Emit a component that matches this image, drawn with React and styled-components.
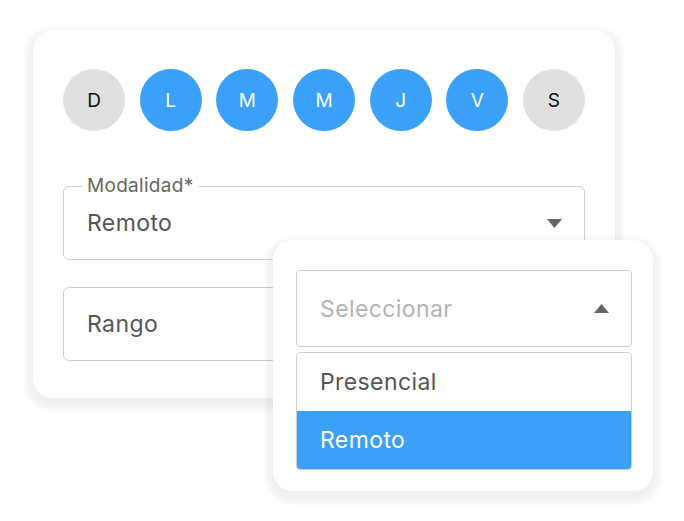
import styled, { createGlobalStyle } from "styled-components";

const GlobalStyle = createGlobalStyle`
  html, body {
    margin: 0;
    padding: 0;
    background: #ffffff;
    font-family: Inter, "Noto Sans", Arial, sans-serif;
  }
`;

const Page = styled.div`
  position: relative;
  width: 684px;
  height: 521px;
  padding: 30px 0 0 33px;
  box-sizing: border-box;
`;

const Card = styled.div`
  width: 582px;
  box-sizing: border-box;
  padding: 39px 30px 37px 30px;
  background: #ffffff;
  border-radius: 20px;
  box-shadow: 0 5px 5px 7px rgba(0, 0, 0, 0.04), 0 4px 12px 6px rgba(0, 0, 0, 0.02);
  display: flex;
  flex-direction: column;
`;

const DaysRow = styled.div`
  display: flex;
  justify-content: space-between;
  margin-bottom: 55px;
`;

const Day = styled.div`
  width: 62px;
  height: 62px;
  border-radius: 50%;
  display: flex;
  align-items: center;
  justify-content: center;
  font-size: 19px;
  background: ${({ active }) => (active ? "#3aa0f8" : "#e0e0e0")};
  color: ${({ active }) => (active ? "#ffffff" : "#111111")};
`;

const Field = styled.div`
  position: relative;
  height: 74px;
  box-sizing: border-box;
  border: 1px solid #cfcfcf;
  border-radius: 6px;
  display: flex;
  align-items: center;
  padding: 0 22px 0 23px;
  margin-bottom: ${({ last }) => (last ? "0" : "27px")};
`;

const Legend = styled.span`
  position: absolute;
  top: -13px;
  left: 18px;
  padding: 0 5px;
  background: #ffffff;
  font-size: 19px;
  line-height: 24px;
  letter-spacing: 0.3px;
  color: #666666;
`;

const Value = styled.span`
  flex: 1;
  font-size: 23px;
  letter-spacing: 0.4px;
  color: ${({ placeholder }) => (placeholder ? "#b3b3b3" : "#555555")};
`;

const Caret = styled.svg`
  width: 15px;
  height: 9px;
  fill: #666666;
  flex: none;
`;

const Popup = styled.div`
  position: absolute;
  left: 273px;
  top: 240px;
  width: 380px;
  box-sizing: border-box;
  padding: 30px 21px 21px 23px;
  background: #ffffff;
  border-radius: 20px;
  box-shadow: 0 5px 5px 7px rgba(0, 0, 0, 0.04), 0 4px 12px 6px rgba(0, 0, 0, 0.02);
  display: flex;
  flex-direction: column;
  gap: 5px;
`;

const SelectBox = styled.div`
  height: 77px;
  box-sizing: border-box;
  border: 1px solid #cfcfcf;
  border-radius: 4px;
  display: flex;
  align-items: center;
  padding: 0 22px 0 23px;
`;

const Options = styled.div`
  border: 1px solid #cfcfcf;
  border-radius: 4px;
  overflow: hidden;
  display: flex;
  flex-direction: column;
`;

const Option = styled.div`
  height: 58px;
  display: flex;
  align-items: center;
  padding: 0 23px;
  font-size: 23px;
  letter-spacing: 0.4px;
  background: ${({ selected }) => (selected ? "#3aa0f8" : "#ffffff")};
  color: ${({ selected }) => (selected ? "#ffffff" : "#555555")};
`;

const days = [
  { label: "D", active: false },
  { label: "L", active: true },
  { label: "M", active: true },
  { label: "M", active: true },
  { label: "J", active: true },
  { label: "V", active: true },
  { label: "S", active: false },
];

function CaretIcon({ up }) {
  return (
    <Caret viewBox="0 0 15 9">
      {up ? <polygon points="0,9 7.5,0 15,9" /> : <polygon points="0,0 15,0 7.5,9" />}
    </Caret>
  );
}

export default function App() {
  return (
    <Page>
      <GlobalStyle />
      <Card>
        <DaysRow>
          {days.map((d, i) => (
            <Day key={i} active={d.active}>
              {d.label}
            </Day>
          ))}
        </DaysRow>
        <Field>
          <Legend>Modalidad*</Legend>
          <Value>Remoto</Value>
          <CaretIcon />
        </Field>
        <Field last>
          <Value>Rango</Value>
        </Field>
      </Card>

      <Popup>
        <SelectBox>
          <Value placeholder>Seleccionar</Value>
          <CaretIcon up />
        </SelectBox>
        <Options>
          <Option>Presencial</Option>
          <Option selected>Remoto</Option>
        </Options>
      </Popup>
    </Page>
  );
}
